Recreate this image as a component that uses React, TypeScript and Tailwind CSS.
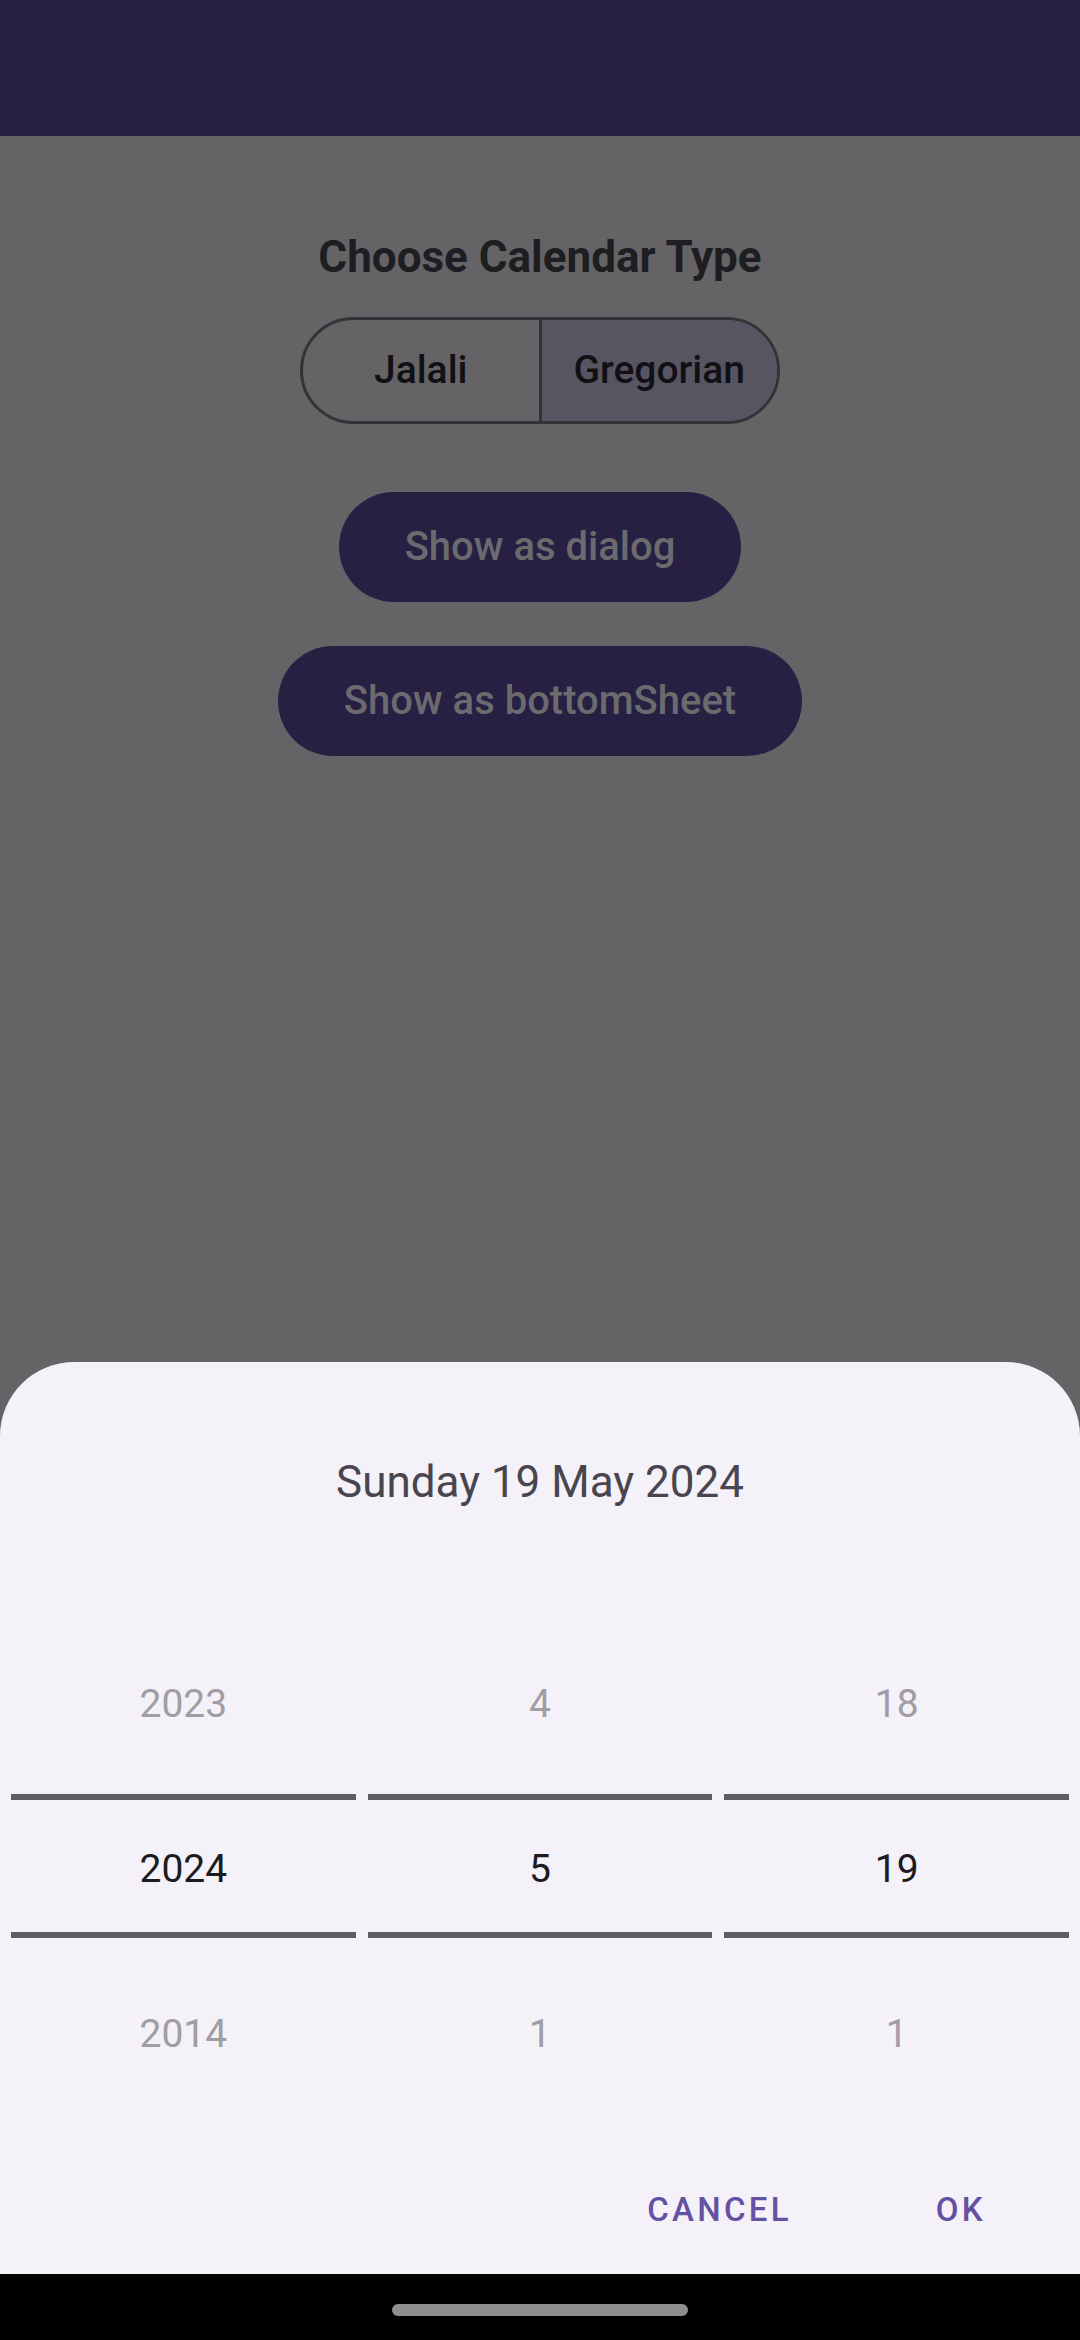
import React from "react";

const font = { fontFamily: "Roboto, 'Noto Sans', sans-serif" };

function PickerColumn({ top, mid, bottom }: { top: string; mid: string; bottom: string }) {
  return (
    <div className="flex-1 flex flex-col items-stretch">
      <div className="h-[50px] leading-[50px] text-[39px] text-center text-[#a09da5]">{top}</div>
      <div className="h-[65px]" />
      <div className="h-[6px] bg-[#5f5c63]" />
      <div className="h-[44px]" />
      <div className="h-[50px] leading-[50px] text-[39px] text-center text-[#1c1b1f]">{mid}</div>
      <div className="h-[38px]" />
      <div className="h-[6px] bg-[#5f5c63]" />
      <div className="h-[71px]" />
      <div className="h-[50px] leading-[50px] text-[39px] text-center text-[#a09da5]">{bottom}</div>
    </div>
  );
}

export default function App() {
  return (
    <div style={font} className="w-[1080px] h-[2340px] flex flex-col bg-[#656366] overflow-hidden">
      <div className="h-[136px] bg-[#272042] shrink-0" />
      <div className="flex-1 flex flex-col items-center">
        <div className="mt-[95px] h-[52px] leading-[52px] text-[44px] font-bold text-[#1e1d21]">
          Choose Calendar Type
        </div>
        <div className="mt-[34px] flex w-[480px] h-[107px] rounded-full border-[3px] border-[#333236] overflow-hidden">
          <div className="flex-1 flex items-center justify-center text-[39px] font-medium text-[#111015]">
            Jalali
          </div>
          <div className="w-[3px] bg-[#333236]" />
          <div className="flex-1 flex items-center justify-center bg-[#585563] text-[39px] font-medium text-[#111015]">
            Gregorian
          </div>
        </div>
        <div className="mt-[68px] h-[110px] px-[66px] rounded-full bg-[#272043] flex items-center justify-center text-[40px] font-medium text-[#6b6a6e]">
          Show as dialog
        </div>
        <div className="mt-[44px] h-[110px] px-[66px] rounded-full bg-[#272043] flex items-center justify-center text-[40px] font-medium text-[#6b6a6e]">
          Show as bottomSheet
        </div>
      </div>
      <div className="h-[912px] shrink-0 bg-[#f4f1f8] rounded-t-[74px] flex flex-col">
        <div className="mt-[94px] h-[52px] leading-[52px] text-[44px] text-center text-[#49454f]">
          Sunday 19 May 2024
        </div>
        <div className="mt-[171px] flex gap-[12px] px-[11px]">
          <PickerColumn top="2023" mid="2024" bottom="2014" />
          <PickerColumn top="4" mid="5" bottom="1" />
          <PickerColumn top="18" mid="19" bottom="1" />
        </div>
        <div className="mt-[131px] flex justify-end pr-[94px] gap-[144px]">
          <div className="h-[40px] leading-[40px] text-[33px] font-medium tracking-[0.1em] text-[#6650a4]">CANCEL</div>
          <div className="h-[40px] leading-[40px] text-[33px] font-medium tracking-[0.1em] text-[#6650a4]">OK</div>
        </div>
      </div>
      <div className="h-[66px] shrink-0 bg-black flex items-center justify-center">
        <div className="w-[296px] h-[12px] rounded-full bg-[#8e8e8e] mt-[6px]" />
      </div>
    </div>
  );
}
